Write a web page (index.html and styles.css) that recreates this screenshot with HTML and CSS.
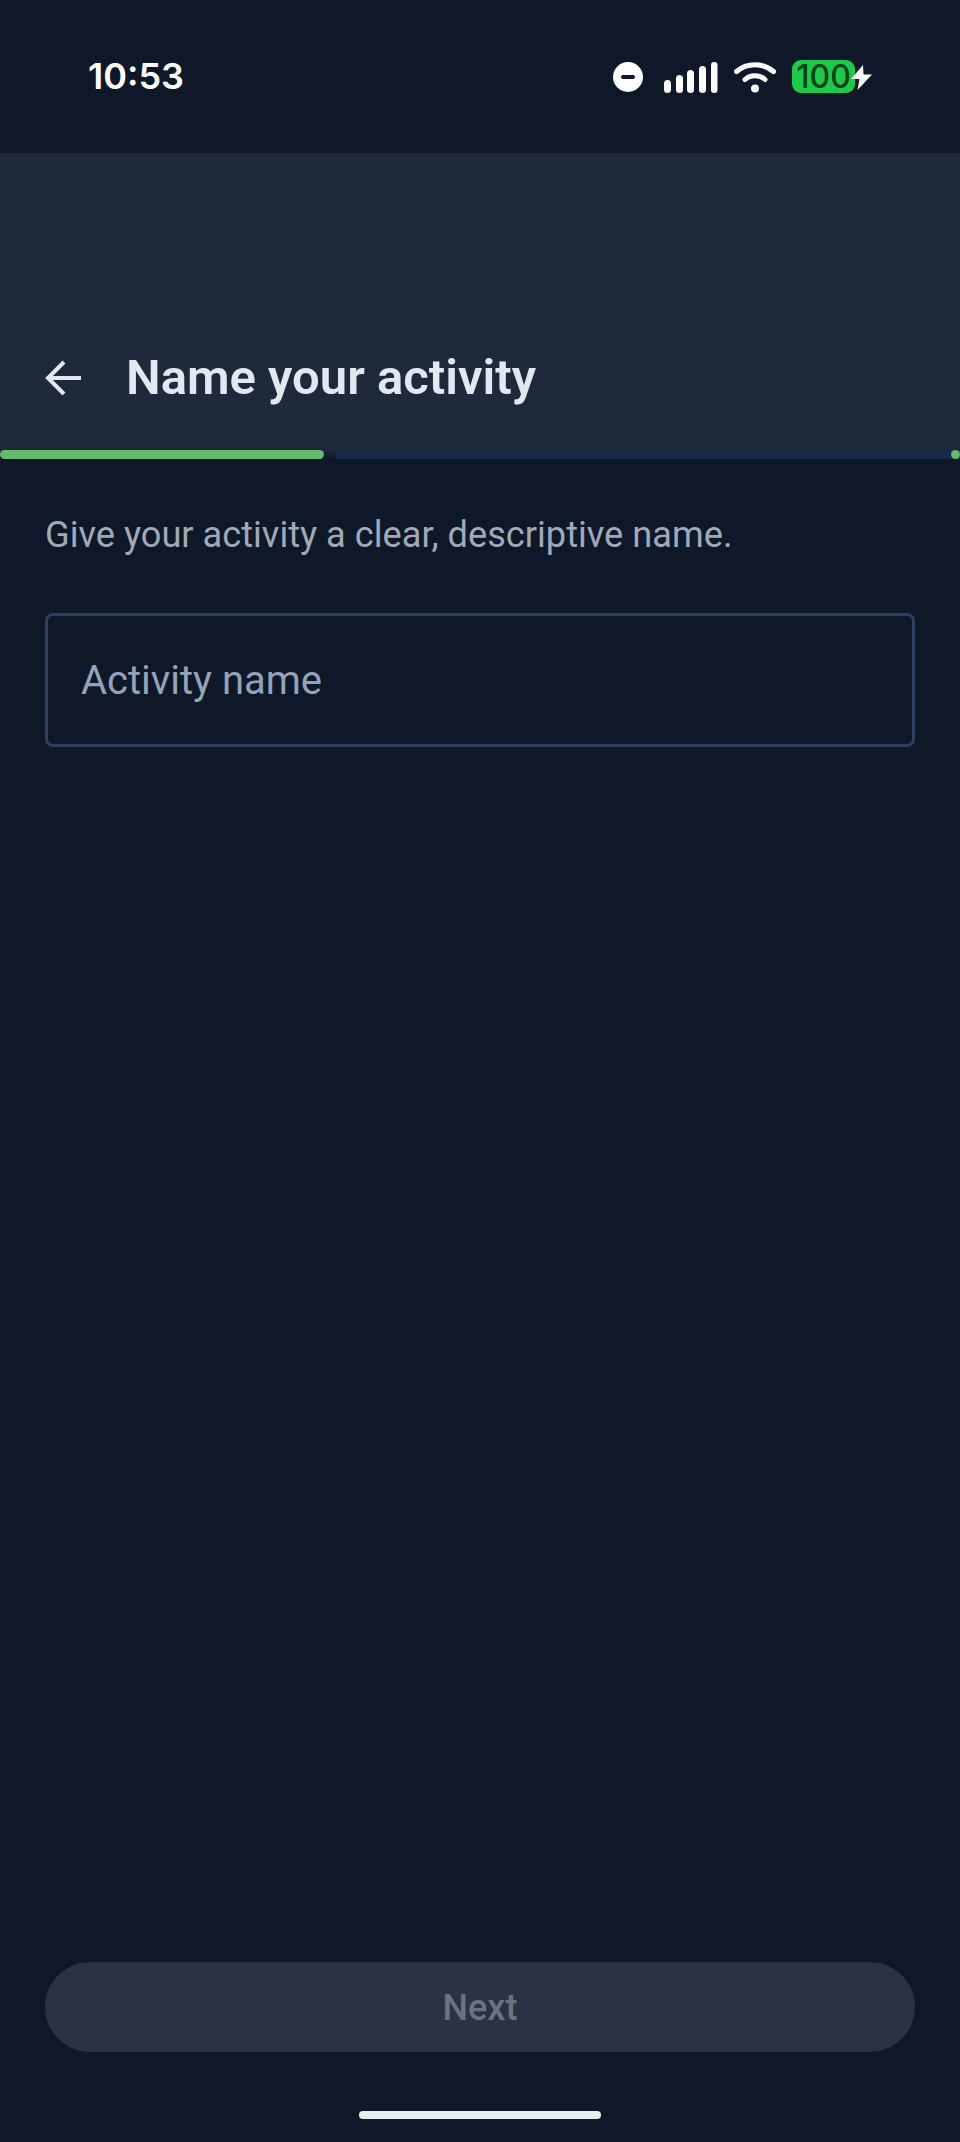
FILE: index.html
```html
<!DOCTYPE html>
<html>
<head>
  <title>Name your activity</title>
  <link rel="stylesheet" href="styles.css">
</head>
<body>
  <div class="screen">
    <!-- status bar -->
    <div class="status-bar">
      <span class="clock">10:53</span>
      <div class="status-icons">
        <svg class="icon-dnd" width="30" height="30" viewBox="0 0 30 30">
          <circle cx="15" cy="15" r="15" fill="#fff"/>
          <rect x="8" y="13" width="14" height="4" rx="2" fill="#0f1829"/>
        </svg>
        <svg class="icon-signal" width="54" height="32" viewBox="0 0 54 32">
          <rect x="0" y="18" width="7" height="13" rx="3.5" fill="#fff"/>
          <rect x="12" y="13" width="7" height="18" rx="3.5" fill="#fff"/>
          <rect x="23" y="8" width="7" height="23" rx="3.5" fill="#fff"/>
          <rect x="35" y="4" width="7" height="27" rx="3.5" fill="#fff"/>
          <rect x="47" y="0" width="6.5" height="31" rx="3.2" fill="#fff"/>
        </svg>
        <svg class="icon-wifi" width="42" height="32" viewBox="0 0 42 32">
          <path d="M2.5 10.5C13 1.5 29 1.500 39.500 10.500" fill="none" stroke="#fff" stroke-width="5" stroke-linecap="round"/>
          <path d="M11 18.500C16.500 13.500 25.500 13.500 31 18.500" fill="none" stroke="#fff" stroke-width="5" stroke-linecap="round"/>
          <circle cx="21" cy="27.500" r="4" fill="#fff"/>
        </svg>
        <div class="battery">
          <span class="battery-level">100</span>
          <svg class="icon-bolt" width="23" height="25" viewBox="0 0 23 25">
            <path d="M13 0L1 14H9.500L7.500 25L22 9.500H13.500Z" fill="#fff"/>
          </svg>
        </div>
      </div>
    </div>

    <div class="top-bar">
      <svg class="back-arrow" width="36" height="36" viewBox="0 0 36 36">
        <path d="M36 18H4M19 2L3 18L19 34" fill="none" stroke="#e2e8f0" stroke-width="4"/>
      </svg>
      <h1>Name your activity</h1>
    </div>

    <div class="progress">
      <div class="progress-done"></div>
      <div class="progress-track"></div>
    </div>

    <div class="content">
      <p class="hint">Give your activity a clear, descriptive name.</p>
      <div class="name-input">Activity name</div>
    </div>

    <div class="footer">
      <button class="next-btn" disabled>Next</button>
      <div class="home-bar"></div>
    </div>
  </div>
</body>
</html>
```

FILE: styles.css
```css
* {
  box-sizing: border-box;
}

body {
  margin: 0;
  font-family: Roboto, "Noto Sans", sans-serif;
  background-color: #0f1829;
}

.screen {
  width: 960px;
  height: 2142px;
  display: flex;
  flex-direction: column;
  overflow: hidden;
}

.status-bar {
  height: 153px;
  flex-shrink: 0;
  padding: 0 87px 0 88px;
  display: flex;
  align-items: flex-start;
  justify-content: space-between;
  color: #fff;
}

.clock {
  margin-top: 55px;
  font-family: Inter, Roboto, sans-serif;
  font-size: 36px;
  line-height: 42px;
  font-weight: 600;
}

.status-icons {
  display: flex;
  align-items: flex-start;
  padding-top: 60px;
}

.icon-dnd {
  margin: 2px 21px 0 0;
}

.icon-signal {
  margin: 2px 16px 0 0;
}

.icon-wifi {
  margin: 1px 16px 0 0;
}

.battery {
  position: relative;
  width: 81px;
  height: 33px;
}

.battery-level {
  display: block;
  width: 63px;
  height: 33px;
  border-radius: 9px;
  background-color: #1ccb49;
  color: #08401c;
  font-family: Inter, Roboto, sans-serif;
  font-size: 32px;
  font-weight: 500;
  line-height: 33px;
  text-align: center;
}

.icon-bolt {
  position: absolute;
  left: 58px;
  top: 5px;
}

.top-bar {
  height: 297px;
  flex-shrink: 0;
  padding: 0 45px 39px;
  background-color: #1e293b;
  display: flex;
  align-items: flex-end;
}

.back-arrow {
  margin-bottom: 15px;
}

.top-bar h1 {
  margin: 0 0 0 45px;
  font-size: 49px;
  line-height: 66px;
  font-weight: 600;
  color: #e2e8f0;
}

.progress {
  height: 9px;
  flex-shrink: 0;
  display: flex;
  gap: 10px;
  background: linear-gradient(#1e293b, #0f1829);
}

.progress-done {
  width: 324px;
  border-radius: 5px;
  background-color: #66bb6a;
}

.progress-track {
  flex: 1;
  border-radius: 5px 0 0 5px;
  background-color: #1a2847;
  position: relative;
}

.progress-track::after {
  content: "";
  position: absolute;
  right: 0;
  top: 0;
  width: 9px;
  height: 9px;
  border-radius: 50%;
  background-color: #66bb6a;
}

.content {
  flex: 1;
  padding: 52px 45px 0;
}

.hint {
  margin: 0;
  font-size: 36.200px;
  line-height: 48px;
  color: #a0a9b8;
}

.name-input {
  margin-top: 54px;
  height: 134px;
  padding: 0 33px;
  display: flex;
  align-items: center;
  border: 3px solid #2b3f63;
  border-radius: 8px;
  font-size: 40px;
  color: #94a3b8;
}

.footer {
  flex-shrink: 0;
  padding: 0 45px 23px;
  display: flex;
  flex-direction: column;
  align-items: center;
}

.next-btn {
  width: 100%;
  height: 90px;
  border: 0;
  border-radius: 45px;
  background-color: #2a3245;
  color: #6b7280;
  font-family: Roboto, sans-serif;
  font-size: 36px;
  font-weight: 500;
  padding-top: 2px;
}

.home-bar {
  margin-top: 59px;
  width: 242px;
  height: 8px;
  border-radius: 4px;
  background-color: #e8edf0;
}
```
